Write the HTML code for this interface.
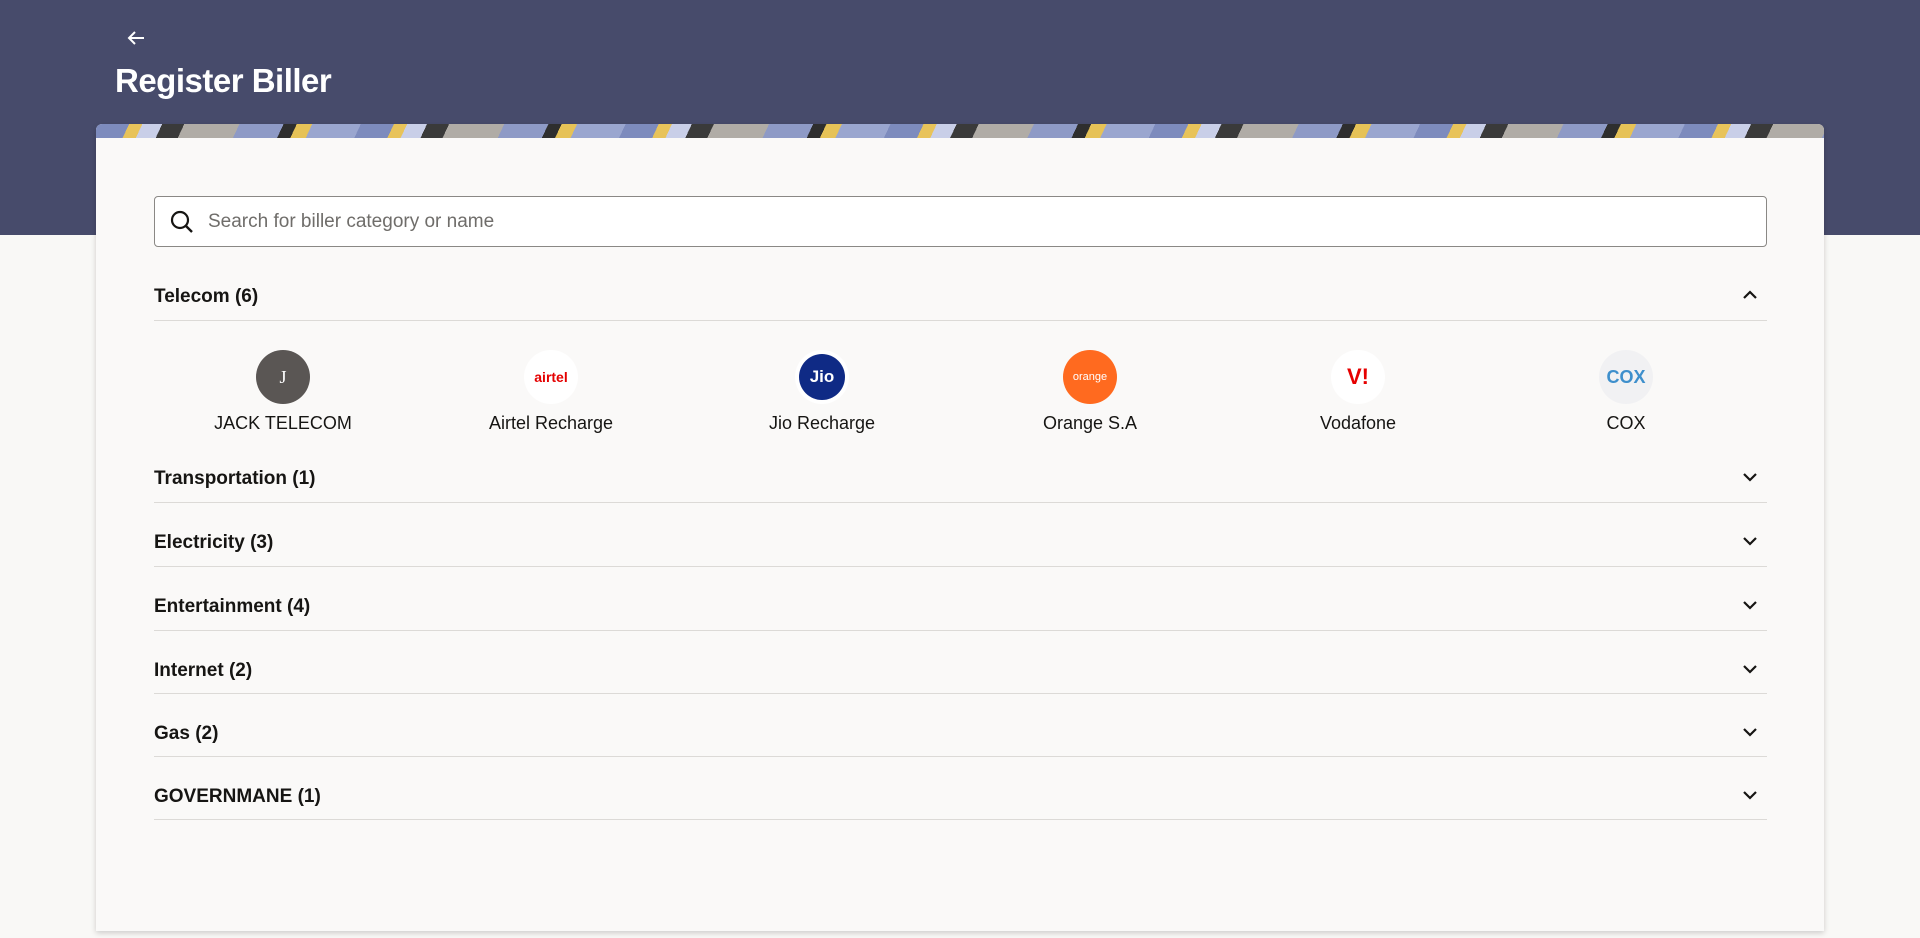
<!DOCTYPE html>
<html><head><meta charset="utf-8"><style>
*{margin:0;padding:0;box-sizing:border-box}
body{width:1920px;height:938px;background:#f9f8f6;font-family:"Liberation Sans",sans-serif;color:#161513;position:relative;overflow:hidden}
.hdr{position:absolute;left:0;top:0;width:1920px;height:235px;background:#474b6b}
.back{position:absolute;left:124px;top:26px;width:24px;height:24px}
h1{position:absolute;left:115px;top:62px;font-size:33px;font-weight:bold;color:#fff;letter-spacing:-0.5px}
.card{position:absolute;left:96px;top:124px;width:1728px;height:807px;background:#faf9f8;border-radius:6px 6px 0 0;box-shadow:0 2px 6px rgba(0,0,0,.18);overflow:hidden}
.banner{height:14px;background:repeating-linear-gradient(115deg,#7d8bbd 0 30px,#e8c35a 30px 42px,#c9cfe8 42px 60px,#3a3a3a 60px 80px,#b0aca6 80px 130px,#8e9ac6 130px 170px,#2e2e2e 170px 182px,#e6c257 182px 196px,#9aa6cf 196px 240px)}
.search{position:absolute;left:58px;top:72px;width:1613px;height:51px;background:#fff;border:1px solid #8a8885;border-radius:4px}
.search span{position:absolute;left:53px;top:14px;font-size:19px;color:#6f6d6a}
.search svg{position:absolute;left:14px;top:12px}
.row{position:absolute;left:58px;width:1613px;border-bottom:1px solid #dcdad7}
.row b{position:absolute;left:0;font-size:19px}
.row svg{position:absolute;right:8px}
.item{position:absolute;top:226px;width:220px;text-align:center;font-size:18px;color:#161513}
.item .c{width:54px;height:54px;border-radius:50%;margin:0 auto 9px;display:flex;align-items:center;justify-content:center;overflow:hidden}
</style></head><body>
<div class="hdr"></div>
<svg class="back" viewBox="0 0 24 24"><path d="M20 12H5M11 6l-6 6 6 6" stroke="#fff" stroke-width="2" fill="none"/></svg>
<h1>Register Biller</h1>
<div class="card">
<div class="banner"></div>
<div class="search"><svg width="26" height="26" viewBox="0 0 26 26"><circle cx="11" cy="11" r="8" stroke="#161513" stroke-width="2.2" fill="none"/><path d="M17 17l6 6" stroke="#161513" stroke-width="2.4"/></svg><span>Search for biller category or name</span></div>
<div class="row" style="top:150px;height:47px"><b style="top:12px">Telecom (6)</b><svg style="top:12px" width="18" height="18" viewBox="0 0 18 18"><path d="M3 12l6-6 6 6" stroke="#161513" stroke-width="2.2" fill="none"/></svg></div>

<div class="item" style="left:77px"><div class="c" style="background:#5a5654;color:#fff;font-family:'Liberation Serif',serif;font-size:18px">J</div>JACK TELECOM</div>
<div class="item" style="left:345px"><div class="c" style="background:#fff;color:#e40000;font-weight:bold;font-size:14px">airtel</div>Airtel Recharge</div>
<div class="item" style="left:616px"><div class="c" style="background:#fff"><div style="width:46px;height:46px;border-radius:50%;background:#0f2a85;color:#fff;font-weight:bold;font-size:17px;display:flex;align-items:center;justify-content:center">Jio</div></div>Jio Recharge</div>
<div class="item" style="left:884px"><div class="c" style="background:#ff6a1f;color:#fff;font-size:11px">orange</div>Orange S.A</div>
<div class="item" style="left:1152px"><div class="c" style="background:#fff;color:#e60000;font-weight:bold;font-size:22px">V!</div>Vodafone</div>
<div class="item" style="left:1420px"><div class="c" style="background:#f1f1f3;color:#3e8fcc;font-weight:bold;font-size:18px">COX</div>COX</div>

<div class="row" style="top:342px;height:37px"><b style="top:2px">Transportation (1)</b><svg style="top:2px" width="18" height="18" viewBox="0 0 18 18"><path d="M3 6l6 6 6-6" stroke="#161513" stroke-width="2.2" fill="none"/></svg></div>
<div class="row" style="top:379px;height:64px"><b style="top:29px">Electricity (3)</b><svg style="top:29px" width="18" height="18" viewBox="0 0 18 18"><path d="M3 6l6 6 6-6" stroke="#161513" stroke-width="2.2" fill="none"/></svg></div>
<div class="row" style="top:443px;height:64px"><b style="top:29px">Entertainment (4)</b><svg style="top:29px" width="18" height="18" viewBox="0 0 18 18"><path d="M3 6l6 6 6-6" stroke="#161513" stroke-width="2.2" fill="none"/></svg></div>
<div class="row" style="top:507px;height:63px"><b style="top:29px">Internet (2)</b><svg style="top:29px" width="18" height="18" viewBox="0 0 18 18"><path d="M3 6l6 6 6-6" stroke="#161513" stroke-width="2.2" fill="none"/></svg></div>
<div class="row" style="top:570px;height:63px"><b style="top:29px">Gas (2)</b><svg style="top:29px" width="18" height="18" viewBox="0 0 18 18"><path d="M3 6l6 6 6-6" stroke="#161513" stroke-width="2.2" fill="none"/></svg></div>
<div class="row" style="top:633px;height:63px"><b style="top:29px">GOVERNMANE (1)</b><svg style="top:29px" width="18" height="18" viewBox="0 0 18 18"><path d="M3 6l6 6 6-6" stroke="#161513" stroke-width="2.2" fill="none"/></svg></div>
</div>
</body></html>
